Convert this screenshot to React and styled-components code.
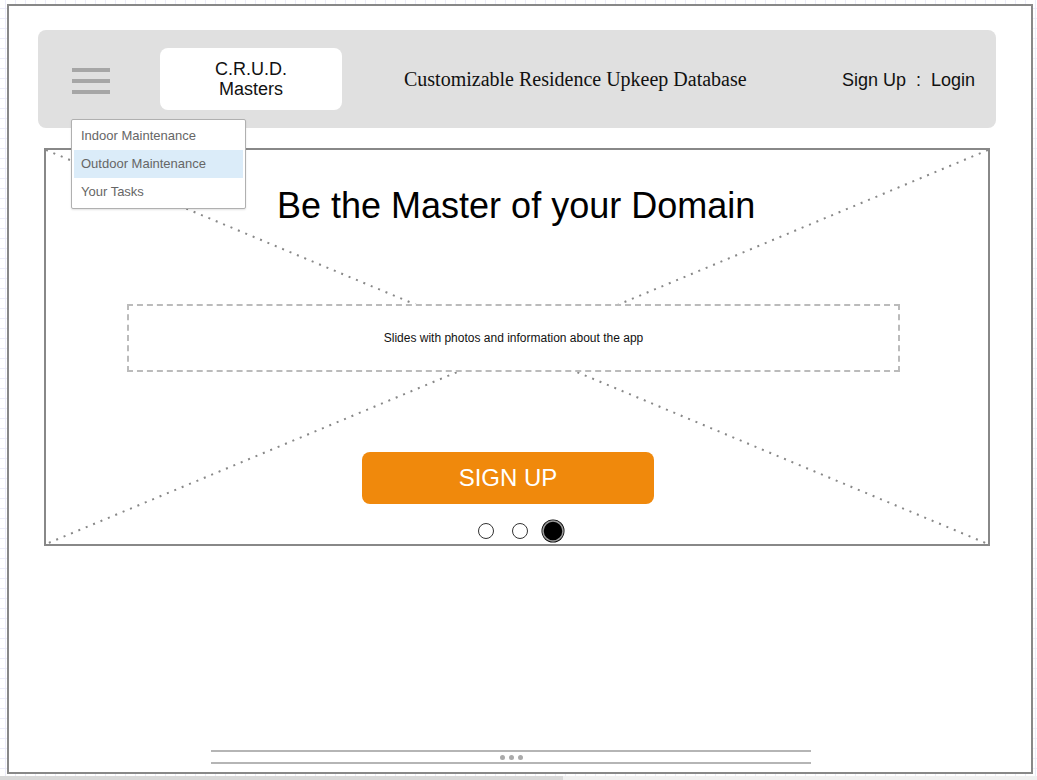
import React from "react";
import styled, { createGlobalStyle } from "styled-components";

const GlobalStyle = createGlobalStyle`
  html, body {
    margin: 0;
    padding: 0;
  }
  body {
    width: 1037px;
    height: 780px;
    overflow: hidden;
    font-family: "Liberation Sans", Arial, sans-serif;
    background-color: #ffffff;
    background-image:
      linear-gradient(to right, #ececf9 1px, transparent 1px),
      linear-gradient(to bottom, #ececf9 1px, transparent 1px);
    background-size: 10px 10px;
    background-position: 5px 8px;
  }
`;

const Page = styled.div`
  display: flex;
  flex-direction: column;
  height: 780px;
`;

const Frame = styled.div`
  margin: 4px 0 0 7px;
  width: 1026px;
  height: 770px;
  box-sizing: border-box;
  border: 2px solid #888888;
  background: #ffffff;
  display: flex;
  flex-direction: column;
`;

const Header = styled.div`
  position: relative;
  margin: 24px 0 0 29px;
  width: 958px;
  height: 98px;
  box-sizing: border-box;
  padding: 0 21px 0 34px;
  background: #e0e0e0;
  border-radius: 8px;
  display: flex;
  align-items: center;
`;

const Burger = styled.div`
  width: 38px;
  display: flex;
  flex-direction: column;
  gap: 7px;
  margin-top: 4px;

  span {
    display: block;
    height: 4px;
    background: #a6a6a6;
  }
`;

const Logo = styled.div`
  margin-left: 50px;
  width: 182px;
  height: 62px;
  background: #ffffff;
  border-radius: 8px;
  display: flex;
  flex-direction: column;
  align-items: center;
  justify-content: center;
  font-size: 18px;
  line-height: 20px;
  color: #111;
`;

const SiteTitle = styled.div`
  margin-left: 62px;
  font-family: "Liberation Serif", "Times New Roman", serif;
  font-size: 20px;
  color: #111;
`;

const AuthLinks = styled.div`
  margin-left: auto;
  margin-top: 2px;
  font-size: 18px;
  white-space: pre;
  color: #111;
`;

const Dropdown = styled.div`
  position: absolute;
  left: 33px;
  top: 89px;
  width: 175px;
  box-sizing: border-box;
  padding: 2px 2px;
  background: #ffffff;
  border: 1.5px solid #b0b0b0;
  border-radius: 2px;
  box-shadow: 0 1px 2px rgba(0, 0, 0, 0.12);
  z-index: 2;
`;

const MenuItem = styled.div`
  height: 28px;
  line-height: 28px;
  padding-left: 7px;
  font-size: 13px;
  color: #666666;
  background: ${(props) => (props.active ? "#dbecf9" : "transparent")};
`;

const Hero = styled.div`
  position: relative;
  margin: 20px 0 0 35px;
  width: 946px;
  height: 398px;
  box-sizing: border-box;
  border: 2px solid #888888;
  display: flex;
  flex-direction: column;
  align-items: flex-start;
`;

const Cross = styled.svg`
  position: absolute;
  inset: 0;
  width: 100%;
  height: 100%;
  z-index: 0;
`;

const HeroTitle = styled.h1`
  position: relative;
  z-index: 1;
  margin: 36px 0 0 231px;
  font-size: 36px;
  font-weight: 400;
  line-height: 40px;
  color: #000;
`;

const Slides = styled.div`
  position: relative;
  z-index: 1;
  margin: 78px 0 0 81px;
  width: 773px;
  height: 68px;
  box-sizing: border-box;
  border: 2px dashed #bbbbbb;
  background: #ffffff;
  display: flex;
  align-items: center;
  justify-content: center;
  font-size: 12px;
  color: #111;
`;

const SignUpButton = styled.button`
  position: relative;
  z-index: 1;
  margin: 80px 0 0 316px;
  width: 292px;
  height: 52px;
  border: none;
  border-radius: 8px;
  background: #f0890c;
  color: #ffffff;
  font-family: "Liberation Sans", Arial, sans-serif;
  font-size: 24px;
  cursor: pointer;
`;

const Pager = styled.svg`
  position: relative;
  z-index: 1;
  margin: 14px 0 0 424px;
  display: block;
`;

const Scrubber = styled.div`
  margin: auto 0 8px 202px;
  width: 600px;
  height: 10px;
  border-top: 2px solid #b5b5b5;
  border-bottom: 2px solid #b5b5b5;
  display: flex;
  align-items: center;
  justify-content: center;
  gap: 4px;

  span {
    width: 5px;
    height: 5px;
    border-radius: 50%;
    background: #aaaaaa;
  }
`;

const ScrollTrack = styled.div`
  margin-top: 2px;
  height: 4px;
  background: #f0f0f0;

  div {
    width: 563px;
    height: 100%;
    background: #d8d8d8;
  }
`;

const App = () => {
  return (
    <Page>
      <GlobalStyle />
      <Frame>
        <Header>
          <Burger>
            <span />
            <span />
            <span />
          </Burger>
          <Logo>
            <div>C.R.U.D.</div>
            <div>Masters</div>
          </Logo>
          <SiteTitle>Customizable Residence Upkeep Database</SiteTitle>
          <AuthLinks>{"Sign Up  :  Login"}</AuthLinks>
          <Dropdown>
            <MenuItem>Indoor Maintenance</MenuItem>
            <MenuItem active>Outdoor Maintenance</MenuItem>
            <MenuItem>Your Tasks</MenuItem>
          </Dropdown>
        </Header>
        <Hero>
          <Cross preserveAspectRatio="none">
            <line x1="0" y1="0" x2="100%" y2="100%" stroke="#888" strokeWidth="2" strokeDasharray="2 6" />
            <line x1="100%" y1="0" x2="0" y2="100%" stroke="#888" strokeWidth="2" strokeDasharray="2 6" />
          </Cross>
          <HeroTitle>Be the Master of your Domain</HeroTitle>
          <Slides>Slides with photos and information about the app</Slides>
          <SignUpButton>SIGN UP</SignUpButton>
          <Pager width="100" height="26" viewBox="0 0 100 26">
            <circle cx="16" cy="13" r="7.5" fill="#fff" stroke="#333" strokeWidth="1" />
            <circle cx="50" cy="13" r="7.5" fill="#fff" stroke="#333" strokeWidth="1" />
            <circle cx="83" cy="13" r="11.5" fill="#000" />
            <circle cx="83" cy="13" r="10" fill="none" stroke="#9a9a9a" strokeWidth="1.5" />
            <circle cx="83" cy="13" r="8.5" fill="#000" />
          </Pager>
        </Hero>
        <Scrubber>
          <span />
          <span />
          <span />
        </Scrubber>
      </Frame>
      <ScrollTrack>
        <div />
      </ScrollTrack>
    </Page>
  );
};

export default App;
